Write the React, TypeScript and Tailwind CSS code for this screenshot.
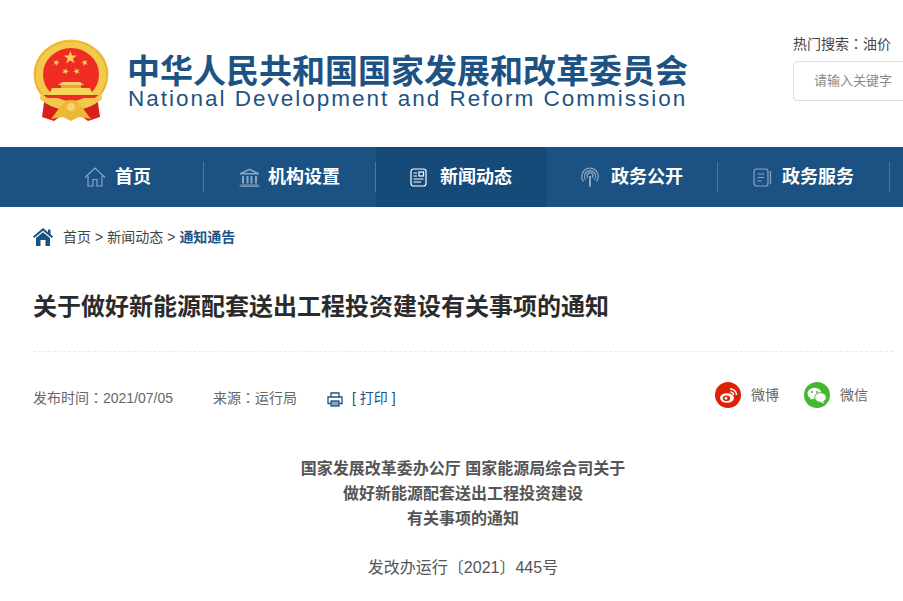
const cjk = "font-['Liberation_Sans','Noto_Sans_CJK_SC',sans-serif]";

// TC face keeps full-width colons and brackets centred, like the original page font
const Colon = () => <span className="font-['Noto_Sans_CJK_TC',sans-serif]">：</span>;

const Star = ({ x, y, r, rot = 0 }: { x: number; y: number; r: number; rot?: number }) => {
  const pts: string[] = [];
  for (let i = 0; i < 10; i++) {
    const rad = i % 2 === 0 ? r : r * 0.4;
    const a = ((-90 + i * 36 + rot) * Math.PI) / 180;
    pts.push(`${(x + rad * Math.cos(a)).toFixed(2)},${(y + rad * Math.sin(a)).toFixed(2)}`);
  }
  return <polygon points={pts.join(' ')} fill="#f6cf55" />;
};

// national emblem, drawn by hand
const Emblem = () => (
  <svg width="78" height="82" viewBox="0 0 78 82" className="shrink-0">
    <path d="M13 56 L10 78 L22 82 L36 72 L26 58 Z" fill="#d8211d" />
    <path d="M65 56 L68 78 L56 82 L42 72 L52 58 Z" fill="#d8211d" />
    <ellipse cx="39" cy="35.5" rx="37.5" ry="35" fill="#f2c94a" />
    <ellipse cx="39" cy="35.5" rx="36" ry="33.5" fill="none" stroke="#e4ae2e" strokeWidth="1.2" />
    <ellipse cx="39" cy="35.5" rx="28" ry="26.5" fill="#ee2c24" />
    <Star x={38.3} y={18.7} r={7} />
    <Star x={24.3} y={23.7} r={3.5} rot={20} />
    <Star x={52.7} y={23.7} r={3.5} rot={-20} />
    <Star x={33.3} y={32.3} r={3.5} rot={20} />
    <Star x={44.7} y={32.3} r={3.5} rot={-20} />
    {/* gate */}
    <path d="M30 43 H48 L52 46 H26 Z" fill="#f3d06a" />
    <rect x="29" y="46" width="20" height="3" fill="#e8a934" />
    <path d="M20 49 H58 L61 56 H17 Z" fill="#f8d45c" />
    <rect x="12" y="56" width="54" height="3" fill="#ee2c24" />
    {/* lower wreath */}
    <path d="M9 54 C17 62 28 65 39 65 C50 65 61 62 69 54 L70 60 C61 68 50 71 39 71 C28 71 17 68 8 60 Z" fill="#f2c94a" />
    <path d="M19 80 C24 74 26 70 30 66 C33 62 36 61 39 61 C42 61 45 62 48 66 C52 70 54 74 59 80 L47 78 L39 82 L31 78 Z" fill="#edb838" />
    <circle cx="39" cy="68" r="4" fill="#f7d566" />
  </svg>
);

const navIcons = {
  home: (
    <svg width="22" height="20" viewBox="0 0 22 20" fill="none" stroke="#8aa5c2" strokeWidth="1.2">
      <path d="M1 10.5 L11 1 L21 10.5" />
      <path d="M4 9 V19 H9 V12.5 H13 V19 H18 V9" />
    </svg>
  ),
  org: (
    <svg width="21" height="19" viewBox="0 0 21 19" fill="#8aa5c2">
      <path d="M10.5 0.5 L20 5 V6.5 H1 V5 Z M10.5 2.2 L5 5 H16 Z" fillRule="evenodd" />
      <path d="M3 8 H5 V15.5 H3 Z M7.5 8 H9.5 V15.5 H7.5 Z M11.5 8 H13.5 V15.5 H11.5 Z M16 8 H18 V15.5 H16 Z" />
      <rect x="1.5" y="16.5" width="18" height="1" />
      <rect x="0.5" y="17.8" width="20" height="1" />
    </svg>
  ),
  news: (
    <svg width="18" height="19" viewBox="0 0 18 19" fill="none" stroke="#ffffff" strokeWidth="1.2">
      <rect x="1" y="1" width="15" height="17" rx="2.5" />
      <rect x="9" y="4" width="4.5" height="4" />
      <path d="M3.5 5 H7 M3.5 8 H7 M3.5 11 H13.5 M3.5 14 H11" />
    </svg>
  ),
  open: (
    <svg width="20" height="20" viewBox="0 0 20 20" fill="none" stroke="#8aa5c2" strokeWidth="1.3">
      <path d="M3.4 14.5 A8.3 8.3 0 1 1 16.6 14.5" />
      <path d="M5.8 12.8 A5.5 5.5 0 1 1 14.2 12.8" />
      <path d="M8 10.5 A2.8 2.8 0 1 1 12 10.5" />
      <path d="M10 9 V19.5" strokeWidth="2" />
    </svg>
  ),
  service: (
    <svg width="19" height="19" viewBox="0 0 19 19" fill="none" stroke="#8aa5c2" strokeWidth="1.2">
      <rect x="1" y="1" width="14" height="17" rx="2.5" />
      <path d="M4.5 6 H11 M4.5 9.5 H11 M4.5 13 H8.5" />
      <path d="M17.5 3 V16" />
    </svg>
  ),
};

const navItems = [
  { label: '首页', icon: navIcons.home, pad: 'pl-[52px]', gap: 'gap-[9px]', w: 'w-[172px]' },
  { label: '机构设置', icon: navIcons.org, pad: 'pl-[35px]', gap: 'gap-[8px]', w: 'w-[172px]' },
  { label: '新闻动态', icon: navIcons.news, pad: 'pl-[34px]', gap: 'gap-[12px]', w: 'w-[171px]', active: true },
  { label: '政务公开', icon: navIcons.open, pad: 'pl-[33px]', gap: 'gap-[11px]', w: 'w-[171px]' },
  { label: '政务服务', icon: navIcons.service, pad: 'pl-[35px]', gap: 'gap-[10px]', w: 'w-[172px]' },
];

export default function App() {
  return (
    <div className={`w-[903px] h-[601px] overflow-hidden bg-white ${cjk}`}>
      {/* Header */}
      <div className="h-[147px] flex justify-between pl-[32px]">
        <div className="flex items-start pt-[39px] gap-[17px]">
          <Emblem />
          <div className="pt-[19px] text-[#1d5384]">
            <div className="text-[33px] leading-[28px] font-bold whitespace-nowrap">中华人民共和国国家发展和改革委员会</div>
            <div className="text-[22.5px] leading-[26px] tracking-[2px] whitespace-nowrap ml-[1px]">National Development and Reform Commission</div>
          </div>
        </div>
        <div className="w-[110px] pt-[34px] shrink-0">
          <div className="text-[14px] leading-[18px] text-[#444] whitespace-nowrap">热门搜索<Colon />油价</div>
          <div className="mt-[8px] h-[40px] w-[130px] border border-[#ddd] rounded-[4px] pl-[20px] flex items-center text-[13px] text-[#888] whitespace-nowrap">请输入关键字</div>
        </div>
      </div>

      {/* Nav */}
      <div className="h-[60px] bg-[#1b5283] flex pl-[32px]">
        {navItems.map((item) => (
          <div
            key={item.label}
            className={`${item.w} ${item.pad} ${item.gap} shrink-0 h-full flex items-center relative ${item.active ? 'bg-[#164a78]' : ''}`}
          >
            {item.icon}
            <span className="text-[18px] font-bold text-white whitespace-nowrap">{item.label}</span>
            {!item.active && <span className="absolute right-0 top-[15px] h-[30px] w-px bg-[#4c779e]" />}
          </div>
        ))}
      </div>

      {/* Content */}
      <div className="px-[33px] w-[926px]">
        <div className="h-[60px] flex items-center text-[14px] text-[#444] whitespace-nowrap">
          <svg width="20" height="18" viewBox="0 0 20 18" className="mr-[10px]" fill="#1b5283">
            <path d="M10 0 L15 4.2 V1.5 H17.5 V6.3 L20 8.5 L18.8 10 L10 2.8 L1.2 10 L0 8.5 Z" />
            <path d="M3 10 L10 4.3 L17 10 V18 H12.5 V12 H7.5 V18 H3 Z" />
          </svg>
          <span>首页</span>
          <span className="ml-[4px] mr-[4px]">&gt;</span>
          <span>新闻动态</span>
          <span className="ml-[4px] mr-[4px]">&gt;</span>
          <span className="font-bold text-[#1b5283]">通知通告</span>
        </div>

        <h1 className="mt-[24px] text-[24px] leading-[32px] font-bold text-[#2b2b2b] whitespace-nowrap">关于做好新能源配套送出工程投资建设有关事项的通知</h1>
        <div className="mt-[28px] border-t border-dashed border-[#ebebeb]" />

        <div className="mt-[28px] h-[36px] flex items-center justify-between text-[14px] text-[#666]">
          <div className="flex items-center whitespace-nowrap">
            <span className="w-[180px]">发布时间<Colon />2021/07/05</span>
            <span className="w-[114px]">来源<Colon />运行局</span>
            <svg width="16" height="15" viewBox="0 0 16 15" fill="none" stroke="#1b5283" strokeWidth="1.3" className="mt-[3px]">
              <path d="M4 5 V1 H12 V5" />
              <path d="M3.5 11.5 H1 V5 H15 V11.5 H12.5" />
              <rect x="4" y="9" width="8" height="5" fill="#8aa5c2" />
            </svg>
            <span className="ml-[9px] text-[#1b5283]">[ 打印 ]</span>
          </div>
          <div className="flex items-center mr-[25px] mt-[-6px] whitespace-nowrap">
            <span className="w-[26px] h-[26px] rounded-full bg-[#dc2308] flex items-center justify-center">
              <svg width="19" height="17" viewBox="0 0 19 17" fill="none">
                <ellipse cx="8" cy="11" rx="7" ry="4.8" fill="#fff" />
                <ellipse cx="7.5" cy="11.2" rx="3.7" ry="2.8" fill="#dc2308" />
                <circle cx="7" cy="11.3" r="1.4" fill="#fff" />
                <path d="M11 2 A6 6 0 0 1 17.5 8" stroke="#fff" strokeWidth="1.5" />
                <path d="M11.5 5 A3 3 0 0 1 14.5 8" stroke="#fff" strokeWidth="1.3" />
              </svg>
            </span>
            <span className="ml-[10px] w-[53px] text-[14px]">微博</span>
            <span className="w-[26px] h-[26px] rounded-full bg-[#44b731] flex items-center justify-center">
              <svg width="20" height="17" viewBox="0 0 20 17" fill="#fff">
                <ellipse cx="7.5" cy="6.5" rx="7" ry="5.8" />
                <path d="M4 10 L3.5 13 L7 11 Z" />
                <ellipse cx="13.5" cy="10.5" rx="5.8" ry="4.8" stroke="#44b731" strokeWidth="1" />
                <path d="M16 14 L17 16.5 L13.5 15 Z" />
                <circle cx="5" cy="5" r="1" fill="#44b731" />
                <circle cx="10" cy="5" r="1" fill="#44b731" />
              </svg>
            </span>
            <span className="ml-[10px] text-[14px]">微信</span>
          </div>
        </div>

        <div className="mt-[40px] text-center text-[#555]">
          <p className="text-[16px] leading-[25px] font-bold">
            国家发展改革委办公厅 国家能源局综合司关于<br />做好新能源配套送出工程投资建设<br />有关事项的通知
          </p>
          <p className="mt-[24px] text-[16px] leading-[25px]">发改办运行〔2021〕445号</p>
        </div>
      </div>
    </div>
  );
}
